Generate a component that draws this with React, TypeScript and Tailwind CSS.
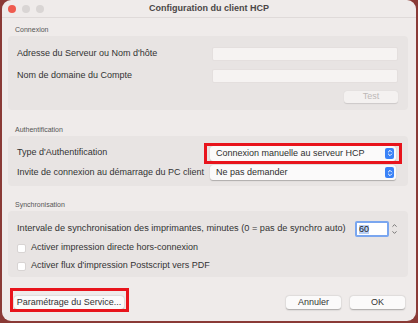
import { ChevronsUpDown, ChevronUp, ChevronDown } from "lucide-react";

const font = { fontFamily: '"Liberation Sans", Arial, sans-serif' };

function Field() {
  return <div className="h-[14px] w-[186px] rounded-[2px] bg-[#f6f3f2] border border-[#e4dfde]" />;
}

function Select({ label }: { label: string }) {
  return (
    <div className="h-[15px] w-[186px] rounded-[3px] bg-[#fbfafa] shadow-[0_0.5px_1px_rgba(0,0,0,0.25)] flex items-center pl-[6px] pr-[2px]">
      <span className="flex-1 text-[9px] text-[#2f2f2f] leading-none">{label}</span>
      <span className="w-[9px] h-[11px] rounded-[2px] bg-[#3a82f7] flex items-center justify-center">
        <ChevronsUpDown size={8} strokeWidth={3} color="white" />
      </span>
    </div>
  );
}

function Checkbox({ label }: { label: string }) {
  return (
    <div className="flex items-center gap-[5px] h-[18px]">
      <span className="w-[9px] h-[9px] rounded-[2px] bg-white border border-[#d8d4d3]" />
      <span className="text-[9px] text-[#333]">{label}</span>
    </div>
  );
}

function Button({ label, w }: { label: string; w: string }) {
  return (
    <div className={`${w} h-[13px] rounded-[3px] bg-[#fbfafa] shadow-[0_0.5px_1.5px_rgba(0,0,0,0.3)] flex items-center justify-center text-[9px] text-[#333]`}>
      {label}
    </div>
  );
}

export default function App() {
  return (
    <div className="w-[418px] h-[323px] bg-[#8a3a36] overflow-hidden" style={font}>
      <div className="ml-[2px] w-[414px] h-[321px] bg-[#efebea] rounded-[9px] flex flex-col">
        {/* Title bar */}
        <div className="relative h-[18px] border-b border-[#dfdad9] flex items-center justify-center">
          <div className="absolute left-[6px] top-[5px] flex gap-[6px]">
            <span className="w-[8px] h-[8px] rounded-full bg-[#ef5b4f]" />
            <span className="w-[8px] h-[8px] rounded-full bg-[#d9d5d4]" />
            <span className="w-[8px] h-[8px] rounded-full bg-[#d9d5d4]" />
          </div>
          <span className="text-[9px] font-bold text-[#4a4646]">Configuration du client HCP</span>
        </div>

        {/* Connexion */}
        <div className="mt-[7px] ml-[13px] h-[9px] text-[7px] text-[#555] leading-none flex items-center">Connexion</div>
        <div className="mt-[2px] ml-[6px] w-[400px] h-[74px] rounded-[4px] bg-[#e8e4e3] flex flex-col pt-[11px] pl-[9px] pr-[10px]">
          <div className="flex items-center justify-between h-[14px]">
            <span className="text-[9px] text-[#333]">Adresse du Serveur ou Nom d'hôte</span>
            <Field />
          </div>
          <div className="mt-[8px] flex items-center justify-between h-[14px]">
            <span className="text-[9px] text-[#333]">Nom de domaine du Compte</span>
            <Field />
          </div>
          <div className="mt-[8px] flex justify-end">
            <div className="w-[54px] h-[12px] rounded-[3px] bg-[#f4f1f0] shadow-[0_0.5px_1px_rgba(0,0,0,0.12)] flex items-center justify-center text-[9px] text-[#bdb8b7]">Test</div>
          </div>
        </div>

        {/* Authentification */}
        <div className="mt-[15px] ml-[13px] h-[9px] text-[7px] text-[#555] leading-none flex items-center">Authentification</div>
        <div className="mt-[2px] ml-[6px] w-[400px] h-[50px] rounded-[4px] bg-[#e8e4e3] flex flex-col pt-[10px] pl-[9px] pr-[12px]">
          <div className="flex items-center justify-between h-[14px]">
            <span className="text-[9px] text-[#333]">Type d'Authentification</span>
            <div className="relative">
              <div className="absolute -left-[6px] -top-[3px] w-[198px] h-[21px] border-[3px] border-[#e8141c]" />
              <Select label="Connexion manuelle au serveur HCP" />
            </div>
          </div>
          <div className="mt-[5px] flex items-center justify-between h-[15px]">
            <span className="text-[9px] text-[#333]">Invite de connexion au démarrage du PC client</span>
            <Select label="Ne pas demander" />
          </div>
        </div>

        {/* Synchronisation */}
        <div className="mt-[14px] ml-[13px] h-[9px] text-[7px] text-[#555] leading-none flex items-center">Synchronisation</div>
        <div className="mt-[2px] ml-[6px] w-[400px] h-[66px] rounded-[4px] bg-[#e8e4e3] flex flex-col pt-[10px] pl-[9px] pr-[10px]">
          <div className="flex items-center h-[16px]">
            <span className="text-[9.2px] text-[#333]">Intervale de synchronisation des imprimantes, minutes (0 = pas de synchro auto)</span>
            <div className="ml-auto flex items-center gap-[2px]">
              <div className="w-[34px] h-[16px] bg-white border-[2px] border-[#7aa6ef] rounded-[2px] flex items-center pl-[2px]">
                <span className="text-[9px] text-[#222] bg-[#b8cff5] leading-none">60</span>
              </div>
              <div className="flex flex-col items-center text-[#666]">
                <ChevronUp size={7} strokeWidth={3} />
                <ChevronDown size={7} strokeWidth={3} />
              </div>
            </div>
          </div>
          <div className="mt-[2px] flex flex-col">
            <Checkbox label="Activer impression directe hors-connexion" />
            <Checkbox label="Activer flux d'impression Postscript vers PDF" />
          </div>
        </div>

        {/* Buttons */}
        <div className="mt-[19px] px-[8px] flex items-center h-[13px]">
          <div className="relative ml-[4px]">
            <div className="absolute -left-[4px] -top-[8px] w-[119px] h-[24px] border-[3px] border-[#e8141c]" />
            <Button label="Paramétrage du Service..." w="w-[110px]" />
          </div>
          <div className="ml-auto flex gap-[9px] mr-[3px]">
            <Button label="Annuler" w="w-[55px]" />
            <Button label="OK" w="w-[55px]" />
          </div>
        </div>
      </div>
    </div>
  );
}
